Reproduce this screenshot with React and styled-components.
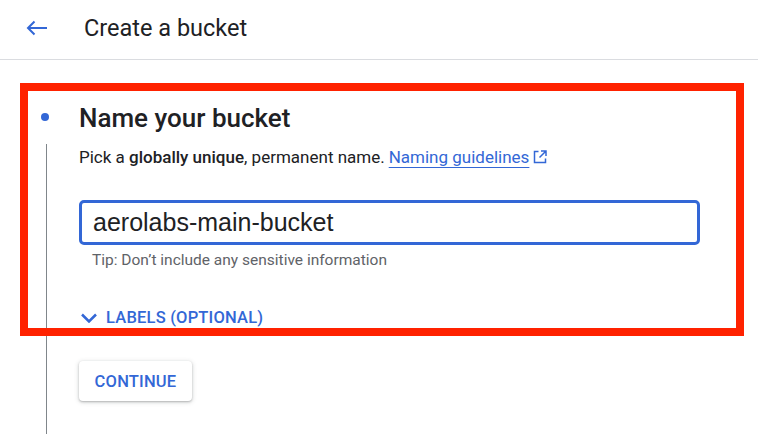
import React from "react";
import styled, { createGlobalStyle } from "styled-components";

const GlobalStyle = createGlobalStyle`
  html, body {
    margin: 0;
    padding: 0;
    background: #ffffff;
  }
  body {
    font-family: Roboto, "Liberation Sans", Arial, sans-serif;
    color: #202124;
  }
`;

const BLUE = "#3367d6";

const Page = styled.div`
  min-height: 100vh;
  display: flex;
  flex-direction: column;
  overflow: hidden;
`;

const Header = styled.header`
  height: 60px;
  display: flex;
  align-items: center;
  border-bottom: 1px solid #dadce0;
  padding: 0 0 4px 26px;
  box-sizing: border-box;
  gap: 36px;
`;

const BackButton = styled.button`
  border: none;
  background: none;
  padding: 0;
  display: flex;
  cursor: pointer;
`;

const Title = styled.h1`
  margin: 0;
  font-size: 23.5px;
  font-weight: 400;
  color: #202124;
`;

const Step = styled.section`
  position: relative;
  flex: 1;
  display: grid;
  grid-template-columns: 79px 1fr;
  padding-top: 42px;
`;

const Rail = styled.div`
  display: flex;
  flex-direction: column;
  align-items: flex-start;
`;

const Dot = styled.span`
  width: 8px;
  height: 8px;
  border-radius: 50%;
  background: ${BLUE};
  margin: 11px 0 0 41px;
`;

const RailLine = styled.span`
  flex: 1;
  width: 1px;
  background: #80868b;
  margin: 23px 0 0 46px;
`;

const Content = styled.div`
  display: flex;
  flex-direction: column;
  align-items: flex-start;
`;

const StepTitle = styled.h2`
  margin: 0;
  font-size: 26px;
  line-height: 32px;
  font-weight: 500;
  color: #202124;
`;

const Hint = styled.p`
  margin: 11px 0 0;
  font-size: 17px;
  line-height: 24px;
  color: #202124;
  display: flex;
  align-items: center;

  b {
    font-weight: 500;
    white-space: pre;
  }
`;

const Link = styled.a`
  color: ${BLUE};
  text-decoration: underline;
  text-underline-offset: 4px;
  text-decoration-thickness: 1px;
  margin-left: 4px;
`;

const ExtIcon = styled.svg`
  margin-left: 4px;
`;

const NameInput = styled.input`
  margin-top: 31px;
  width: 621px;
  height: 45px;
  box-sizing: border-box;
  border: 3px solid ${BLUE};
  border-radius: 5px;
  padding: 0 11px;
  font-family: "Liberation Sans", Arial, sans-serif;
  font-size: 25px;
  color: #202124;
  outline: none;
`;

const Tip = styled.div`
  margin: 5px 0 0 13px;
  font-size: 15.5px;
  line-height: 20px;
  color: #5f6368;
`;

const LabelsToggle = styled.button`
  margin-top: 38px;
  border: none;
  background: none;
  padding: 0 0 0 2px;
  display: flex;
  align-items: center;
  gap: 9px;
  font-family: Roboto, sans-serif;
  font-size: 16.5px;
  line-height: 20px;
  font-weight: 500;
  letter-spacing: 0.2px;
  color: ${BLUE};
  cursor: pointer;
`;

const ContinueButton = styled.button`
  margin-top: 33px;
  width: 113px;
  height: 40px;
  padding: 0;
  border: none;
  border-radius: 4px;
  background: #fff;
  box-shadow: 0 1px 2px rgba(60, 64, 67, 0.3), 0 1px 4px 1px rgba(60, 64, 67, 0.15);
  font-family: Roboto, sans-serif;
  font-size: 16.5px;
  font-weight: 500;
  letter-spacing: 0.2px;
  color: ${BLUE};
  cursor: pointer;
`;

// red annotation frame drawn over the step
const Highlight = styled.div`
  position: absolute;
  top: 23px;
  left: 20px;
  width: 724px;
  height: 253px;
  box-sizing: border-box;
  border: 8px solid #ff2200;
  pointer-events: none;
`;

export default function App() {
  return (
    <Page>
      <GlobalStyle />
      <Header>
        <BackButton aria-label="Back">
          <svg width="22" height="16" viewBox="0 0 22 16">
            <path
              d="M21 8H2M8.5 1.5L2 8l6.5 6.5"
              fill="none"
              stroke={BLUE}
              strokeWidth="2"
            />
          </svg>
        </BackButton>
        <Title>Create a bucket</Title>
      </Header>

      <Step>
        <Rail>
          <Dot />
          <RailLine />
        </Rail>
        <Content>
          <StepTitle>Name your bucket</StepTitle>
          <Hint>
            Pick a&nbsp;<b>globally unique</b>, permanent name.
            <Link href="#">Naming guidelines</Link>
            <ExtIcon width="14" height="14" viewBox="0 0 14 14">
              <path
                d="M5.5 1.5H1.5v11h11V8.5M8 1h5v5M13 1L6.5 7.5"
                fill="none"
                stroke={BLUE}
                strokeWidth="1.5"
              />
            </ExtIcon>
          </Hint>
          <NameInput defaultValue="aerolabs-main-bucket" />
          <Tip>Tip: Don’t include any sensitive information</Tip>
          <LabelsToggle>
            <svg width="16" height="10" viewBox="0 0 16 10">
              <path d="M1 1.5l7 7 7-7" fill="none" stroke={BLUE} strokeWidth="2.5" />
            </svg>
            LABELS (OPTIONAL)
          </LabelsToggle>
          <ContinueButton>CONTINUE</ContinueButton>
        </Content>
        <Highlight />
      </Step>
    </Page>
  );
}
